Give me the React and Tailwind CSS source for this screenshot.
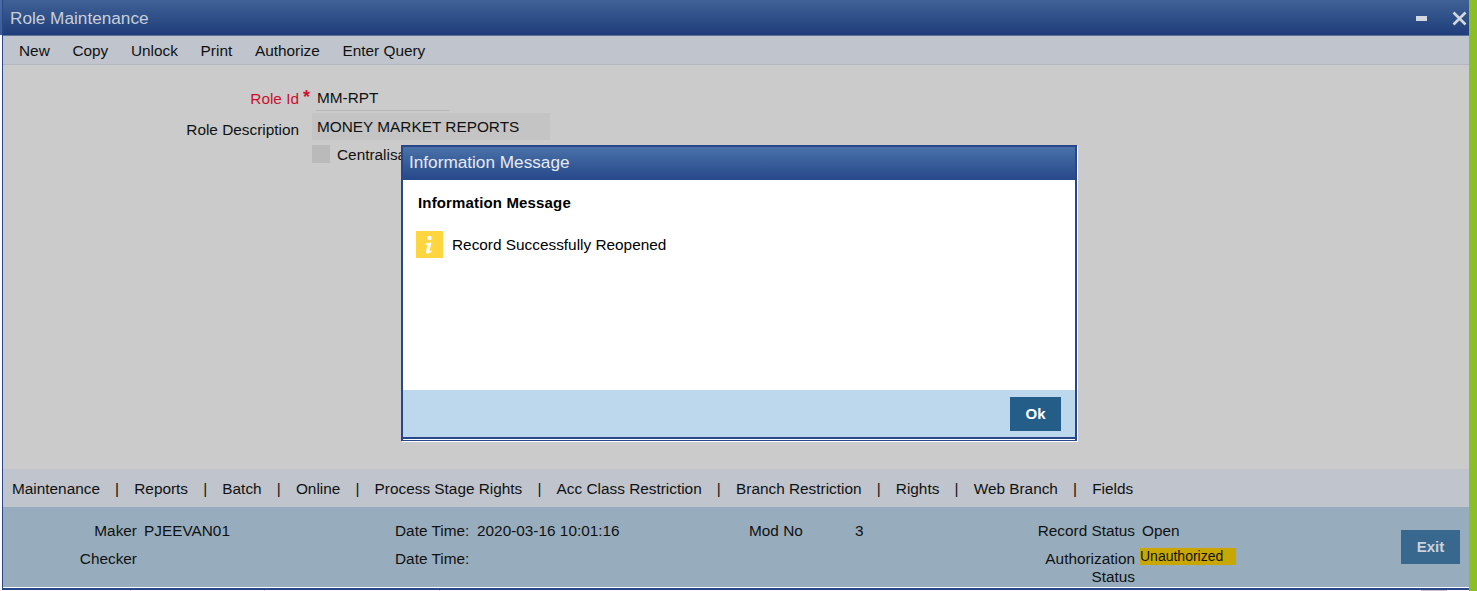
import React from "react";

const toolbarItems = ["New", "Copy", "Unlock", "Print", "Authorize", "Enter Query"];
const tabs = [
  "Maintenance",
  "Reports",
  "Batch",
  "Online",
  "Process Stage Rights",
  "Acc Class Restriction",
  "Branch Restriction",
  "Rights",
  "Web Branch",
  "Fields",
];

const InfoIcon = () => (
  <div className="w-[27px] h-[27px] bg-[#ffd63f] flex items-center justify-center">
    <svg width="27" height="27" viewBox="0 0 27 27">
      <circle cx="13.5" cy="7" r="2.2" fill="#fff" />
      <path d="M9.5 12.5 L15.5 11.5 L13.5 20 Q13.3 21 15.8 19.6 L16 20.6 Q13 23 10.8 22.6 Q9.6 22.2 10 20.6 L11.5 14 L9.5 13.8 Z" fill="#fff" />
    </svg>
  </div>
);

const App = () => {
  return (
    <div className="relative w-[1477px] h-[591px] overflow-hidden bg-white flex font-['Liberation_Sans',Arial,sans-serif] text-[15.36px] text-[#111]">
      {/* sliver of the page behind the window */}
      <div className="w-[2px] shrink-0">
        <div className="h-[35px] bg-gradient-to-b from-[#4a6ea6] to-[#3a5c96]" />
      </div>

      <div className="w-[1467px] h-[590px] flex flex-col shrink-0 border-l border-l-[#27478a]">
        {/* title bar */}
        <div className="h-[36px] pt-[2px] shrink-0 flex items-center justify-between bg-gradient-to-b from-[#3f6296] to-[#1f3d7a] border-b border-[#5a7398] pl-[7px] pr-[2px]">
          <span className="text-[17.2px] text-[#c9cfd9]">Role Maintenance</span>
          <div className="flex items-center gap-[25px]">
            <div className="w-[11px] h-[5px] bg-[#d3d8e0]" />
            <svg width="15" height="15" viewBox="0 0 15 15">
              <path d="M1.5 1.5 L13.5 13.5 M13.5 1.5 L1.5 13.5" stroke="#d3d8e0" strokeWidth="2.6" />
            </svg>
          </div>
        </div>

        {/* toolbar */}
        <div className="h-[29px] pt-[2px] shrink-0 flex items-center gap-[22.7px] pl-[16px] bg-[#bfc4cd] border-b border-[#b4b8bd]">
          {toolbarItems.map((item) => (
            <span key={item}>{item}</span>
          ))}
        </div>

        {/* form */}
        <div className="flex-1 bg-[#cbcbcb] pt-[20px]">
          <div className="flex h-[27px]">
            <span className="w-[296px] text-right text-[#c8102e] pt-[2px]">Role Id</span>
            <span className="w-[17px] pl-[4px] text-[#d01030] text-[18px] font-bold leading-[24px]">*</span>
            <div className="w-[133px] h-[26px] border-b border-[#b5b5b5] pl-[1px] pt-[1px]">MM-RPT</div>
          </div>
          <div className="flex h-[30px] mt-[1px]">
            <span className="w-[296px] text-right pt-[5px]">Role Description</span>
            <div className="ml-[13px] w-[238px] h-[27px] bg-[#c4c4c4] pl-[5px] pt-[2px]">MONEY MARKET REPORTS</div>
          </div>
          <div className="flex items-center h-[22px] ml-[309px]">
            <div className="w-[18px] h-[18px] bg-[#bababa]" />
            <span className="ml-[7px] pt-[2px]">Centralisation</span>
          </div>
        </div>

        {/* function tabs */}
        <div className="h-[38px] pt-[1px] shrink-0 flex items-center pl-[9px] bg-[#bfc4cd]">
          {tabs.map((tab, i) => (
            <React.Fragment key={tab}>
              {i > 0 && <span className="w-[34.3px] text-center">|</span>}
              <span>{tab}</span>
            </React.Fragment>
          ))}
        </div>

        {/* audit block */}
        <div className="flex-none h-[80px] bg-[#97adbe] flex pt-[13px]">
          <div className="w-[392px] grid grid-cols-[134px_1fr] auto-rows-[28px] gap-x-[7px] -mt-px">
            <span className="text-right">Maker</span>
            <span>PJEEVAN01</span>
            <span className="text-right">Checker</span>
            <span />
          </div>
          <div className="w-[354px] grid grid-cols-[82px_1fr] auto-rows-[28px] -mt-px">
            <span>Date Time:</span>
            <span>2020-03-16 10:01:16</span>
            <span>Date Time:</span>
            <span />
          </div>
          <div className="w-[223px] flex -mt-px">
            <span className="w-[106px]">Mod No</span>
            <span>3</span>
          </div>
          <div className="w-[163px] grid grid-cols-[163px] auto-rows-[28px] text-right -mt-px">
            <span>Record Status</span>
            <span className="leading-[18px] pt-[3px]">
              Authorization
              <br />
              Status
            </span>
          </div>
          <div className="flex-1 pl-[5px] -mt-px">
            <div className="h-[28px] pl-[2px]">Open</div>
            <div className="w-[96px] h-[18px] bg-[#c8a800] border-t border-[#a9a9a9] text-[14px] leading-[16px]">Unauthorized</div>
          </div>
        </div>

        {/* hairline and window edge */}
        <div className="h-[2px] shrink-0 bg-[#27478a] mt-px" />
      </div>

      {/* page edge */}
      <div className="w-[8px] h-full bg-[#8cbf26] shrink-0" />

      {/* scraps of the page below the window */}
      <div className="absolute left-[130px] top-[590px] w-px h-px bg-[#c9d3e0]" />
      <div className="absolute left-[264px] top-[590px] w-px h-px bg-[#c9d3e0]" />
      <div className="absolute left-[439px] top-[590px] w-px h-px bg-[#c9d3e0]" />
      <div className="absolute left-[1421px] top-[590px] w-[26px] h-px bg-[#c4c4c4]" />

      {/* exit sits over the audit block */}
      <button className="absolute left-[1401px] top-[530px] w-[59px] h-[34px] bg-[#39688f] text-[#c9d3db] font-bold text-[15px]">Exit</button>

      {/* modal */}
      <div className="absolute left-[401px] top-[145px] w-[676px] h-[296px] border-x-2 border-t-2 border-[#27478a] flex flex-col shadow-[1px_1px_0_#fff]">
        <div className="h-[33px] pb-[2px] shrink-0 flex items-center pl-[6px] bg-gradient-to-b from-[#4a72a8] to-[#27478a] text-[17.2px] text-[#e6ebf3]">
          Information Message
        </div>
        <div className="flex-1 bg-white px-[13px] pt-[14px]">
          <div className="pl-[2px] font-bold text-[15px] tracking-[0.01em] leading-[18px] text-black">Information Message</div>
          <div className="flex items-center mt-[19px]">
            <InfoIcon />
            <span className="ml-[9px] text-black">Record Successfully Reopened</span>
          </div>
        </div>
        <div className="h-[49px] shrink-0 bg-[#bdd7ec] flex items-start justify-end pr-[14px] pt-[7px] border-b-2 border-[#27478a]">
          <button className="w-[51px] h-[34px] bg-[#235d88] text-white font-bold text-[15px]">Ok</button>
        </div>
        <div className="h-px shrink-0 bg-white" />
        <div className="h-px shrink-0 bg-[#27478a]" />
      </div>
    </div>
  );
};

export default App;
